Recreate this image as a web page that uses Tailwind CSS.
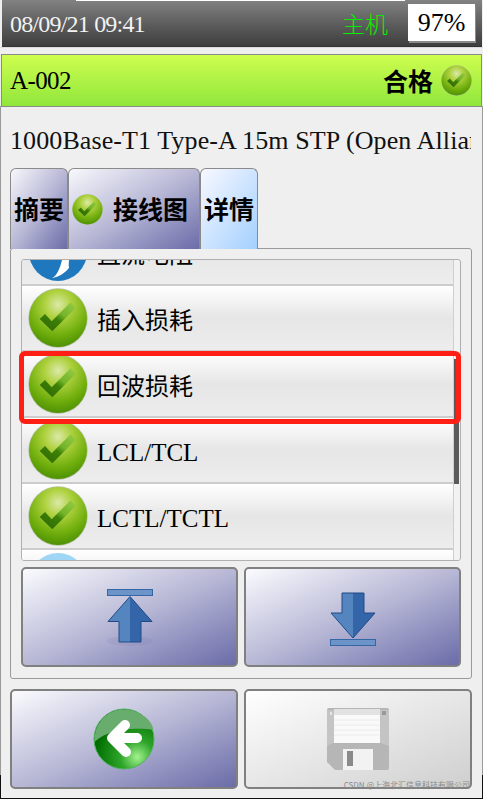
<!doctype html>
<html><head><meta charset="utf-8"><script src="https://cdn.jsdelivr.net/npm/@tailwindcss/browser@4"></script></head>
<body class="bg-[#efefef]">
<svg class="absolute w-0 h-0">
<defs>
<radialGradient id="gball" cx="0.5" cy="0.27" r="0.78"><stop offset="0" stop-color="#dbe9a8"/><stop offset="0.3" stop-color="#aed13e"/><stop offset="0.68" stop-color="#6fae0c"/><stop offset="1" stop-color="#468a02"/></radialGradient>
<linearGradient id="chk" x1="0" y1="1" x2="1" y2="0"><stop offset="0" stop-color="#2c6604"/><stop offset="0.45" stop-color="#3d8006"/><stop offset="0.6" stop-color="#73b428"/><stop offset="1" stop-color="#98cc48"/></linearGradient>
<linearGradient id="arr" x1="0" y1="0" x2="1" y2="0"><stop offset="0" stop-color="#5585bf"/><stop offset="0.5" stop-color="#5585bf"/><stop offset="0.5" stop-color="#3465a8"/><stop offset="1" stop-color="#3465a8"/></linearGradient>
<symbol id="ok" viewBox="0 0 60 60"><circle cx="30" cy="30" r="29.7" fill="#b9c2a8"/><circle cx="30" cy="30" r="29" fill="url(#gball)"/><path d="M11.7 31L17 26l6.7 7.3 19-19 5 5.7-23.4 23.3z" fill="url(#chk)"/></symbol>
</defs>
</svg>
<div class="w-[483px] h-[799px] overflow-hidden flex flex-col font-['Liberation_Serif','Noto_Sans_CJK_SC',serif] text-black relative">
  <div class="absolute left-[76px] top-0 w-[329px] h-px bg-white z-10"></div>
  <div class="ml-[2px] mr-[1px] h-[47px] shrink-0 bg-gradient-to-b from-[#828282] to-[#3e3e3e] flex items-center text-[#f2f2f2] pl-[8px] border-b border-[#333]">
    <span class="text-[24px] tracking-[-0.8px] mt-[2px]">08/09/21 09:41</span>
    <span class="ml-auto mr-[20px] text-[#00f000] text-[23px] font-['Noto_Sans_CJK_SC',serif] font-light">主机</span>
    <span class="w-[67px] h-[37px] mr-[7px] bg-white text-black flex items-center justify-center text-[26px] mt-[-1px] shadow-[1px_2px_0_#8a8a8a]">97%</span>
  </div>
  <div class="h-[7px] shrink-0 border-t border-[#dcdcdc]"></div>
  <div class="mx-[1px] h-[53px] shrink-0 bg-gradient-to-b from-[#cdfe4f] to-[#90e63c] border border-[#8a8a8a] flex items-center pl-[8px] pr-[9px]">
    <span class="text-[25px] tracking-[-0.6px]">A-002</span>
    <span class="ml-auto font-bold text-[25px] font-['Noto_Sans_CJK_SC',serif]">合格</span>
    <svg class="w-[31px] h-[31px] ml-[8px]"><use href="#ok"/></svg>
  </div>
  <div class="h-[61px] shrink-0 ml-[10px] mr-[12px] pt-[15px] overflow-hidden whitespace-nowrap text-[26px] leading-[38px] tracking-[0.1px] text-[#111]">1000Base-T1 Type-A 15m STP (Open Alliance)</div>
  <div class="flex ml-[10px] h-[81px] shrink-0 relative z-10 font-['Noto_Sans_CJK_SC',serif] font-bold text-[25px]">
    <div class="w-[58px] rounded-t-[6px] border border-b-0 border-[#8a8a8a] bg-gradient-to-br from-[#f8f8fc] via-[#b8b8d6] to-[#6c6ca8] flex items-center justify-center">摘要</div>
    <div class="w-[132px] rounded-t-[6px] border border-b-0 border-[#8a8a8a] bg-gradient-to-br from-[#f8f8fc] via-[#b8b8d6] to-[#6c6ca8] flex items-center pl-[3px]"><svg class="w-[31px] h-[31px] mr-[10px]"><use href="#ok"/></svg>接线图</div>
    <div class="w-[58px] rounded-t-[6px] border border-b-0 border-[#8a8a8a] bg-gradient-to-br from-[#f8f8ff] to-[#a3d0ff] flex items-center justify-center">详情</div>
  </div>
  <div class="ml-[10px] w-[462px] h-[431px] shrink-0 mt-[-1px] border border-[#9a9a9a] rounded-[3px] px-[10px] pt-[10px]">
    <div class="relative h-[302px] border border-[#b0b0b0] rounded-[3px] overflow-hidden">
      <div class="absolute left-[431px] top-0 bottom-0 w-[6px] border-l border-[#cfcfcf] bg-[#f2f2f2]"><div class="absolute top-[99px] left-0 w-[5px] h-[125px] bg-[#5a5a5a]"></div></div>
      <div class="absolute left-0 w-[431px] top-[-40px] font-['Noto_Sans_CJK_SC',serif] text-[24px]">
        <div class="flex items-center h-[66px] border-b-[2px] border-[#cccccc] bg-gradient-to-b from-white via-[#e6e6e6] to-[#ededed]"><svg class="w-[60px] h-[60px] ml-[6px]" viewBox="0 0 60 60"><circle cx="30" cy="30" r="29" fill="#1f78be"/><path d="M24 56c5-2 8-10 10-18 3-7 7-12 10-14-2 8-4 16-3 22-4 5-10 9-17 10z" fill="#fff"/></svg><span class="ml-[9px] mt-[2px]">直流电阻</span></div>
        <div class="flex items-center h-[66px] border-b-[2px] border-[#cccccc] bg-gradient-to-b from-white via-[#e6e6e6] to-[#ededed]"><svg class="w-[60px] h-[60px] ml-[6px]"><use href="#ok"/></svg><span class="ml-[9px] mt-[2px]">插入损耗</span></div>
        <div class="flex items-center h-[66px] border-b-[2px] border-[#cccccc] bg-gradient-to-b from-white via-[#e6e6e6] to-[#ededed]"><svg class="w-[60px] h-[60px] ml-[6px]"><use href="#ok"/></svg><span class="ml-[9px] mt-[2px]">回波损耗</span></div>
        <div class="flex items-center h-[66px] border-b-[2px] border-[#cccccc] bg-gradient-to-b from-white via-[#e6e6e6] to-[#ededed]"><svg class="w-[60px] h-[60px] ml-[6px]"><use href="#ok"/></svg><span class="ml-[9px] mt-[5px] font-['Liberation_Serif',serif] text-[25px]">LCL/TCL</span></div>
        <div class="flex items-center h-[66px] border-b-[2px] border-[#cccccc] bg-gradient-to-b from-white via-[#e6e6e6] to-[#ededed]"><svg class="w-[60px] h-[60px] ml-[6px]"><use href="#ok"/></svg><span class="ml-[9px] mt-[5px] font-['Liberation_Serif',serif] text-[25px]">LCTL/TCTL</span></div>
        <div class="flex items-start h-[66px] bg-gradient-to-b from-white via-[#e6e6e6] to-[#ededed]"><svg class="w-[60px] h-[60px] ml-[6px] mt-[2px]" viewBox="0 0 60 60"><circle cx="30" cy="30" r="29" fill="#9fd6f5"/></svg></div>
      </div>
    </div>
    <div class="flex gap-[6px] mt-[6px]">
      <div class="w-[217px] h-[100px] rounded-[5px] border-2 border-[#808080] bg-gradient-to-br from-[#fbfbfe] via-[#b8b8d6] to-[#6c6ca8] flex items-center justify-center">
        <svg class="w-[46px] h-[60px] mt-[4px]" viewBox="0 0 46 60"><ellipse cx="23" cy="52" rx="23" ry="5" fill="#6c6ca8" opacity="0.12"/><rect x="0.5" y="0.5" width="45" height="6" fill="#6d94c8" stroke="#3465a4"/><path d="M23 7.5L45 32.5H34V53H12V32.5H1z" fill="url(#arr)" stroke="#204a87"/></svg>
      </div>
      <div class="w-[217px] h-[100px] rounded-[5px] border-2 border-[#808080] bg-gradient-to-br from-[#fbfbfe] via-[#b8b8d6] to-[#6c6ca8] flex items-center justify-center">
        <svg class="w-[46px] h-[54px] mt-[4px]" viewBox="0 0 46 54"><rect x="0.5" y="47.5" width="45" height="6" fill="#6d94c8" stroke="#3465a4"/><path d="M12 1H34V21H45L23 46 1 21H12z" fill="url(#arr)" stroke="#204a87"/></svg>
      </div>
    </div>
  </div>
  <div class="flex gap-[6px] ml-[10px] mt-[10px]">
    <div class="w-[228px] h-[100px] rounded-[5px] border-2 border-[#808080] bg-gradient-to-br from-[#fbfbfe] via-[#b8b8d6] to-[#6c6ca8] flex items-center justify-center">
      <svg class="w-[62px] h-[62px]" viewBox="0 0 62 62"><defs><radialGradient id="gb" cx="0.72" cy="0.8" r="0.7"><stop offset="0" stop-color="#a4f28e"/><stop offset="0.4" stop-color="#2ea52a"/><stop offset="1" stop-color="#006d00"/></radialGradient></defs><circle cx="31" cy="31" r="30" fill="url(#gb)" stroke="#4fb25f"/><path d="M1.5 34C1 14 15 1.5 31 1.5S61 14 60 22c-10-2-22-1-31 0C18 23 8 28 1.5 34z" fill="#68ad6e"/><path d="M20 30h24M32 17L19 30l14 14" fill="none" stroke="#fff" stroke-width="10" stroke-linecap="round" stroke-linejoin="round"/></svg>
    </div>
    <div class="w-[228px] h-[100px] rounded-[5px] border-2 border-[#808080] bg-gradient-to-br from-white to-[#cfcfcf] flex items-center justify-center">
      <svg class="w-[62px] h-[62px]" viewBox="0 0 62 62"><path d="M2 0H60a2 2 0 0 1 2 2V60a2 2 0 0 1-2 2H8L0 54V2a2 2 0 0 1 2-2z" fill="#b6b6b6"/><path d="M0 38L6 35H54L62 38V2H0z" fill="#c4c4c4"/><rect x="7" y="1" width="46" height="34" fill="#f9f9f9"/><rect x="7" y="1" width="46" height="6" fill="#e2e2e2"/><path d="M7 12H53M7 17H53M7 22H53M7 27H53" stroke="#ececec"/><rect x="3" y="4" width="2" height="3" fill="#e6e6e6"/><rect x="55" y="3" width="4" height="4" fill="#999"/><rect x="16" y="41" width="30" height="21" fill="#f2f2f2"/><rect x="20" y="43" width="6" height="15" fill="#8a8a8a"/></svg>
    </div>
  </div>
  <div class="absolute left-[19px] top-[351px] w-[442px] h-[73px] border-[5px] border-[#ff1f14] rounded-[6px]"></div>
  <div class="absolute left-0 top-[106px] w-px h-[669px] bg-[#9a9a9a]"></div>
  <div class="absolute right-0 top-[106px] w-px h-[669px] bg-[#9a9a9a]"></div>
  <div class="absolute left-0 top-[775px] w-[1px] h-[24px] bg-[#111]"></div>
  <div class="absolute right-0 top-[775px] w-[1px] h-[24px] bg-[#111]"></div>
  <div class="absolute left-0 right-0 top-[798px] h-px bg-[#111]"></div>
  <div class="absolute right-[13px] top-[779px] text-[8px] leading-[12px] text-[#8a8a8a] font-['Noto_Sans_CJK_SC',sans-serif]">CSDN @上海北汇信息科技有限公司</div>
</div>
</body></html>
